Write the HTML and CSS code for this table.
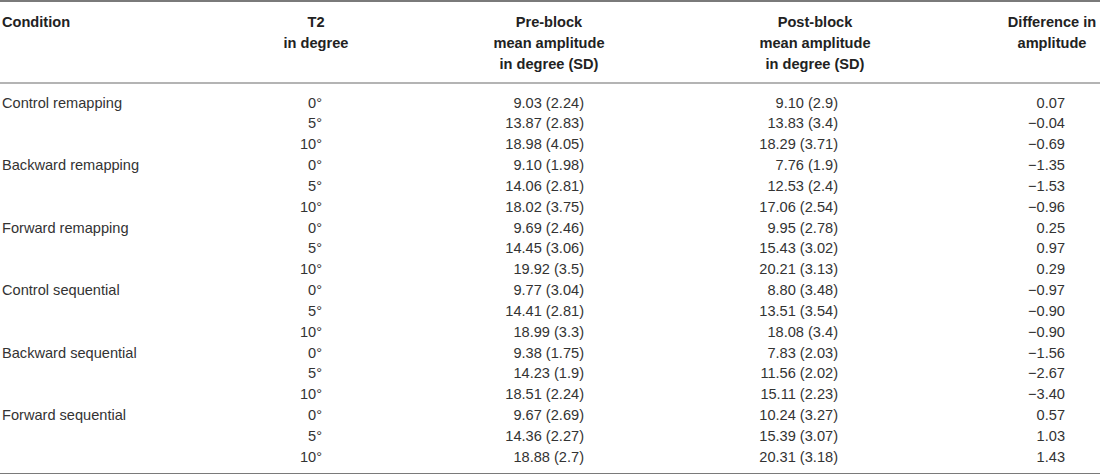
FILE: index.html
```html
<!DOCTYPE html>
<html>
<head>
<meta charset="utf-8">
<link rel="stylesheet" href="styles.css">
</head>
<body>
<table class="data">
<colgroup>
<col class="c1"><col class="c2"><col class="c3"><col class="c4"><col class="c5">
</colgroup>
<thead>
<tr>
<th class="cond">Condition</th>
<th class="t2">T2<br>in degree</th>
<th class="pre">Pre-block<br>mean amplitude<br>in degree (SD)</th>
<th class="post">Post-block<br>mean amplitude<br>in degree (SD)</th>
<th class="diff">Difference in<br>amplitude</th>
</tr>
</thead>
<tbody>
<tr class="first"><td class="cond">Control remapping</td><td class="t2">0°</td><td class="pre">9.03 (2.24)</td><td class="post">9.10 (2.9)</td><td class="diff">0.07</td></tr>
<tr><td class="cond"></td><td class="t2">5°</td><td class="pre">13.87 (2.83)</td><td class="post">13.83 (3.4)</td><td class="diff">−0.04</td></tr>
<tr><td class="cond"></td><td class="t2">10°</td><td class="pre">18.98 (4.05)</td><td class="post">18.29 (3.71)</td><td class="diff">−0.69</td></tr>
<tr><td class="cond">Backward remapping</td><td class="t2">0°</td><td class="pre">9.10 (1.98)</td><td class="post">7.76 (1.9)</td><td class="diff">−1.35</td></tr>
<tr><td class="cond"></td><td class="t2">5°</td><td class="pre">14.06 (2.81)</td><td class="post">12.53 (2.4)</td><td class="diff">−1.53</td></tr>
<tr><td class="cond"></td><td class="t2">10°</td><td class="pre">18.02 (3.75)</td><td class="post">17.06 (2.54)</td><td class="diff">−0.96</td></tr>
<tr><td class="cond">Forward remapping</td><td class="t2">0°</td><td class="pre">9.69 (2.46)</td><td class="post">9.95 (2.78)</td><td class="diff">0.25</td></tr>
<tr><td class="cond"></td><td class="t2">5°</td><td class="pre">14.45 (3.06)</td><td class="post">15.43 (3.02)</td><td class="diff">0.97</td></tr>
<tr><td class="cond"></td><td class="t2">10°</td><td class="pre">19.92 (3.5)</td><td class="post">20.21 (3.13)</td><td class="diff">0.29</td></tr>
<tr><td class="cond">Control sequential</td><td class="t2">0°</td><td class="pre">9.77 (3.04)</td><td class="post">8.80 (3.48)</td><td class="diff">−0.97</td></tr>
<tr><td class="cond"></td><td class="t2">5°</td><td class="pre">14.41 (2.81)</td><td class="post">13.51 (3.54)</td><td class="diff">−0.90</td></tr>
<tr><td class="cond"></td><td class="t2">10°</td><td class="pre">18.99 (3.3)</td><td class="post">18.08 (3.4)</td><td class="diff">−0.90</td></tr>
<tr><td class="cond">Backward sequential</td><td class="t2">0°</td><td class="pre">9.38 (1.75)</td><td class="post">7.83 (2.03)</td><td class="diff">−1.56</td></tr>
<tr><td class="cond"></td><td class="t2">5°</td><td class="pre">14.23 (1.9)</td><td class="post">11.56 (2.02)</td><td class="diff">−2.67</td></tr>
<tr><td class="cond"></td><td class="t2">10°</td><td class="pre">18.51 (2.24)</td><td class="post">15.11 (2.23)</td><td class="diff">−3.40</td></tr>
<tr><td class="cond">Forward sequential</td><td class="t2">0°</td><td class="pre">9.67 (2.69)</td><td class="post">10.24 (3.27)</td><td class="diff">0.57</td></tr>
<tr><td class="cond"></td><td class="t2">5°</td><td class="pre">14.36 (2.27)</td><td class="post">15.39 (3.07)</td><td class="diff">1.03</td></tr>
<tr class="last"><td class="cond"></td><td class="t2">10°</td><td class="pre">18.88 (2.7)</td><td class="post">20.31 (3.18)</td><td class="diff">1.43</td></tr>
</tbody>
</table>
</body>
</html>
```
FILE: styles.css
```css
html, body {
  margin: 0;
  padding: 0;
  background: #ffffff;
}
body {
  font-family: "Liberation Sans", Arial, sans-serif;
  font-size: 14.6px;
  color: #333333;
}
.data {
  width: 1100px;
  table-layout: fixed;
  border-collapse: collapse;
  border-top: 2px solid #7a7a7a;
  border-bottom: 2px solid #7a7a7a;
}
.c1 { width: 250px; }
.c2 { width: 132px; }
.c3 { width: 334px; }
.c4 { width: 198px; }
.c5 { width: 186px; }

.data th {
  font-weight: bold;
  color: #222222;
  line-height: 21px;
  vertical-align: top;
  text-align: center;
  padding: 10px 0 7px 0;
  border-bottom: 2px solid #b4b4b4;
}
.data th.cond { text-align: left; padding-left: 2px; }
.data th.diff { padding-left: 90px; }

.data td {
  font-weight: normal;
  line-height: 20.85px;
  padding: 0;
  text-align: right;
  white-space: nowrap;
}
.data td.cond { text-align: left; padding-left: 2px; }
.data td.t2 { padding-right: 60px; }
.data td.pre { padding-right: 132px; }
.data td.post { padding-right: 76px; }
.data td.diff { padding-right: 35px; }

.data tr.first td { padding-top: 8.5px; }
.data tr.last td { padding-bottom: 5px; }
```
